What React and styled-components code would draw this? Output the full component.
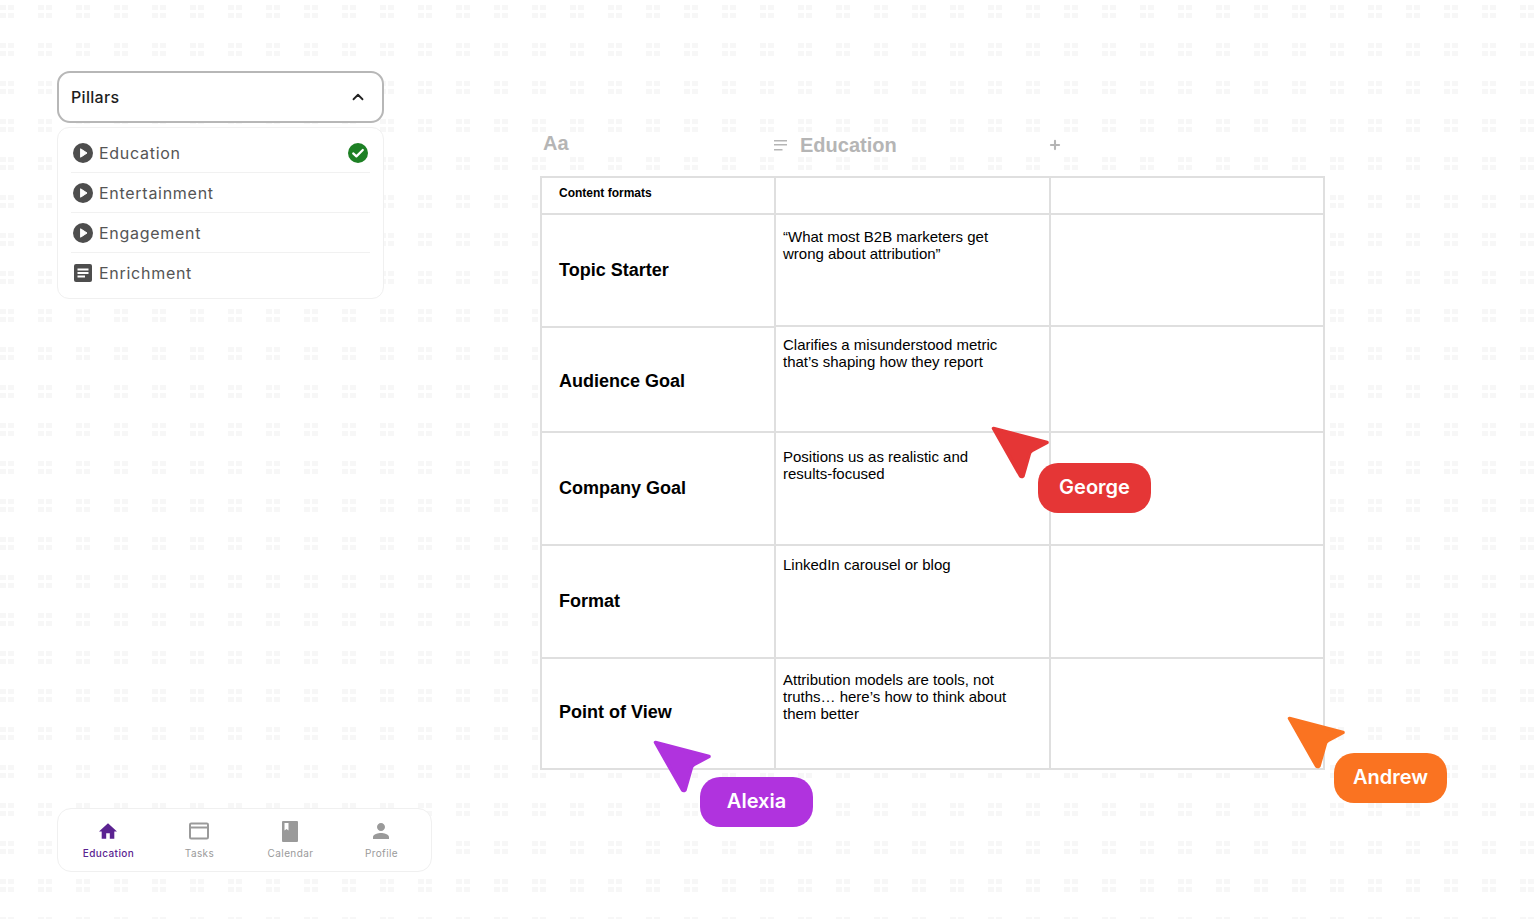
import React from "react"
import styled, { createGlobalStyle } from "styled-components"
import { ChevronUp, Plus } from "lucide-react"

const dot = "conic-gradient(from 270deg at 6px 5px, #f7f7f7 25%, transparent 0)"

const GlobalStyle = createGlobalStyle`
  html, body {
    margin: 0;
    padding: 0;
  }
  body {
    background-color: #fff;
    background-image: ${dot}, ${dot}, ${dot}, ${dot};
    background-size: 38px 38px;
    background-position: 0 5px, 8px 5px, 0 13px, 8px 13px;
    font-family: "Inter", "Liberation Sans", sans-serif;
  }
`

const Page = styled.div`
  display: flex;
  gap: 108px;
  width: 1536px;
  height: 919px;
  padding-left: 57px;
  box-sizing: border-box;
  overflow: hidden;
`

const Side = styled.aside`
  width: 375px;
  display: flex;
  flex-direction: column;
  justify-content: space-between;
  padding: 71px 0 47px;
  box-sizing: border-box;
`

const Menu = styled.div`
  width: 327px;
  display: flex;
  flex-direction: column;
  gap: 4px;
`

const Select = styled.div`
  height: 52px;
  box-sizing: border-box;
  border: 2px solid #b7b7b7;
  border-radius: 13px;
  background: #fff;
  display: flex;
  align-items: center;
  justify-content: space-between;
  padding: 0 15px 0 12px;
  font-size: 16px;
  font-weight: 500;
  letter-spacing: 0.3px;
  color: #1d1d1d;
`

const OptionList = styled.ul`
  list-style: none;
  margin: 0;
  height: 172px;
  box-sizing: border-box;
  padding: 5px 13px 6px;
  background: #fff;
  border: 1px solid #f0f0f0;
  border-radius: 12px;
`

const Option = styled.li`
  height: 40px;
  box-sizing: border-box;
  display: flex;
  align-items: center;
  gap: 6px;
  padding: 0 2px;
  font-size: 16px;
  letter-spacing: 0.72px;
  color: #555;
  border-bottom: 1px solid ${(p) => (p.$last ? "transparent" : "#f1f1f1")};
`

const OptionName = styled.span`
  flex: 1;
`

const BottomNav = styled.nav`
  height: 64px;
  box-sizing: border-box;
  display: grid;
  grid-template-columns: repeat(4, 91px);
  padding: 0 5px;
  background: #fff;
  border: 1px solid #f0f0f0;
  border-radius: 14px;
`

const NavItem = styled.div`
  display: flex;
  flex-direction: column;
  align-items: center;
  padding-top: 12px;
  gap: 5px;
  font-size: 10px;
  letter-spacing: 0.4px;
  line-height: 14px;
  color: ${(p) => (p.$active ? "#5b2391" : "#9a9a9a")};
  font-weight: ${(p) => (p.$active ? 500 : 400)};
`

const NavIconSlot = styled.span`
  height: 20px;
  margin-left: -1px;
  display: flex;
  align-items: center;
`

const Main = styled.main`
  width: 785px;
  padding-top: 128px;
  font-family: "Liberation Sans", Arial, sans-serif;
`

const ColumnBar = styled.div`
  height: 48px;
  display: grid;
  grid-template-columns: 231px 274px 30px;
  align-items: center;
  padding-left: 3px;
  padding-bottom: 14px;
  box-sizing: border-box;
  color: #b5b5b5;
  font-weight: 700;
`

const AaLabel = styled.div`
  font-size: 20px;
  margin-top: -4px;
`

const ColumnName = styled.div`
  display: flex;
  align-items: center;
  gap: 13px;
  font-size: 20px;
`

const TableWrap = styled.div`
  position: relative;
  width: 785px;
`

const Table = styled.div`
  border: 2px solid #dfdfdf;
  background: #fff;
  color: #000;
`

const Row = styled.div`
  display: grid;
  grid-template-columns: 234px 275px 272px;
  height: ${(p) => p.$height}px;
`

const Cell = styled.div`
  box-sizing: border-box;
  background: #fff;
  border-right: ${(p) => (p.$end ? "none" : "2px solid #dfdfdf")};
  border-bottom: ${(p) => (p.$bottom ? "none" : "2px solid #dfdfdf")};
`

const LabelCell = styled(Cell)`
  display: flex;
  align-items: center;
  padding: ${(p) => p.$above || 0}px 0 ${(p) => p.$below || 0}px 17px;
  font-size: 18px;
  font-weight: 700;
  ${(p) => p.$lower && "position: relative; z-index: 1; margin-bottom: -1px;"}
`

const TitleCell = styled(Cell)`
  padding: 8px 0 0 17px;
  font-size: 12px;
  line-height: 14px;
  font-weight: 700;
`

const TextCell = styled(Cell)`
  padding: ${(p) => p.$top}px 28px 0 7px;
  font-size: 15px;
  line-height: 17px;
`

const Collaborator = styled.div`
  position: absolute;
  left: ${(p) => p.$x}px;
  top: ${(p) => p.$y}px;
  width: 113px;
  height: 50px;
  padding-bottom: 2px;
  box-sizing: border-box;
  border-radius: 20px;
  background: ${(p) => p.$color};
  color: #fff;
  display: flex;
  align-items: center;
  justify-content: center;
  font-family: "Inter", "Liberation Sans", sans-serif;
  font-size: 20px;
  font-weight: 600;
  z-index: 2;
`

const Pointer = styled.svg`
  position: absolute;
  left: -50px;
  top: -40px;
`

const PlayIcon = () => (
  <svg width="20" height="20" viewBox="0 0 20 20">
    <circle cx="10" cy="10" r="10" fill="#4d4d4d" />
    <path d="M7.600 5.800 14 10l-6.400 4.200z" fill="#fff" stroke="#fff" strokeLinejoin="round" />
  </svg>
)

const DocIcon = () => (
  <svg width="20" height="20" viewBox="0 0 20 20">
    <rect x="1" y="1" width="18" height="18" rx="2" fill="#4d4d4d" />
    <path d="M4.500 5.500h11v2h-11zM4.500 9h11v2h-11zM4.500 12.500h7.500v2h-7.500z" fill="#fff" />
  </svg>
)

const CheckIcon = () => (
  <svg width="20" height="20" viewBox="0 0 20 20">
    <circle cx="10" cy="10" r="10" fill="#1d8024" />
    <path d="m5.200 10.400 3.200 3 6.400-6.400" fill="none" stroke="#fff" strokeWidth="2.200" strokeLinecap="round" strokeLinejoin="round" />
  </svg>
)

const LinesIcon = () => (
  <svg width="13" height="11" viewBox="0 0 13 11">
    <path d="M0 .75h13M0 4.750h13M0 9.750h8.500" stroke="#b5b5b5" strokeWidth="1.500" />
  </svg>
)

const HomeIcon = ({ color }) => (
  <svg width="20" height="20" viewBox="0.9 0.4 22.2 22.2">
    <path d="M10 20v-6h4v6h5v-8h3L12 3 2 12h3v8z" fill={color} />
  </svg>
)

const CardIcon = ({ color }) => (
  <svg width="20" height="20" viewBox="0 -1.500 20 20">
    <rect x="1" y="1" width="18" height="15" rx="1.200" fill="none" stroke={color} strokeWidth="2" />
    <path d="M1 5h18" stroke={color} strokeWidth="2" />
  </svg>
)

const BookIcon = ({ color }) => (
  <svg width="16" height="21" viewBox="0 0 16 21">
    <path fillRule="evenodd" d="M1 0h14a1 1 0 0 1 1 1v19a1 1 0 0 1-1 1H1a1 1 0 0 1-1-1V1a1 1 0 0 1 1-1zm1.500 2v7.500l2-1.500 2 1.500V2z" fill={color} />
  </svg>
)

const PersonIcon = ({ color }) => (
  <svg width="20" height="20" viewBox="2 2 20 20">
    <path d="M12 12c2.210 0 4-1.790 4-4s-1.790-4-4-4-4 1.790-4 4 1.790 4 4 4zm0 2c-2.670 0-8 1.340-8 4v2h16v-2c0-2.660-5.330-4-8-4z" fill={color} />
  </svg>
)

const options = [
  { name: "Education", Icon: PlayIcon, checked: true },
  { name: "Entertainment", Icon: PlayIcon },
  { name: "Engagement", Icon: PlayIcon },
  { name: "Enrichment", Icon: DocIcon },
]

const navItems = [
  { label: "Education", Icon: HomeIcon, active: true },
  { label: "Tasks", Icon: CardIcon },
  { label: "Calendar", Icon: BookIcon },
  { label: "Profile", Icon: PersonIcon },
]

const rows = [
  { label: "Topic Starter", text: "“What most B2B marketers get wrong about attribution”", height: 112, top: 13, lower: true },
  { label: "Audience Goal", text: "Clarifies a misunderstood metric that’s shaping how they report", height: 106, top: 9, above: 4 },
  { label: "Company Goal", text: "Positions us as realistic and results-focused", height: 113, top: 15 },
  { label: "Format", text: "LinkedIn carousel or blog", height: 113, top: 10 },
  { label: "Point of View", text: "Attribution models are tools, not truths… here’s how to think about them better", height: 109, top: 12, bottom: true, below: 2 },
]

const people = [
  { name: "George", color: "#e53636", x: 498, y: 287 },
  { name: "Alexia", color: "#b033de", x: 160, y: 601 },
  { name: "Andrew", color: "#fa7321", x: 794, y: 577 },
]

function App() {
  return (
    <Page>
      <GlobalStyle />
      <Side>
        <Menu>
          <Select>
            Pillars
            <ChevronUp size={18} strokeWidth={2.4} color="#222" />
          </Select>
          <OptionList>
            {options.map(({ name, Icon, checked }, i) => (
              <Option key={name} $last={i === options.length - 1}>
                <Icon />
                <OptionName>{name}</OptionName>
                {checked && <CheckIcon />}
              </Option>
            ))}
          </OptionList>
        </Menu>
        <BottomNav>
          {navItems.map(({ label, Icon, active }) => (
            <NavItem key={label} $active={active}>
              <NavIconSlot>
                <Icon color={active ? "#5b2391" : "#9a9a9a"} />
              </NavIconSlot>
              {label}
            </NavItem>
          ))}
        </BottomNav>
      </Side>
      <Main>
        <ColumnBar>
          <AaLabel>Aa</AaLabel>
          <ColumnName>
            <LinesIcon />
            Education
          </ColumnName>
          <Plus size={14} strokeWidth={3.6} color="#b5b5b5" />
        </ColumnBar>
        <TableWrap>
          <Table>
            <Row $height={37}>
              <TitleCell>Content formats</TitleCell>
              <Cell />
              <Cell $end />
            </Row>
            {rows.map((row) => (
              <Row key={row.label} $height={row.height}>
                <LabelCell $lower={row.lower} $bottom={row.bottom} $above={row.above} $below={row.below}>
                  {row.label}
                </LabelCell>
                <TextCell $top={row.top} $bottom={row.bottom}>{row.text}</TextCell>
                <Cell $end $bottom={row.bottom} />
              </Row>
            ))}
          </Table>
          {people.map((person) => (
            <Collaborator key={person.name} $x={person.x} $y={person.y} $color={person.color}>
              <Pointer width="64" height="58" viewBox="0 0 64 58">
                <path
                  d="M5.500 5.500 L59 19.500 L44 27.500 Q41.500 29 41 32 L35 53 Q33.500 54 32.500 53 Z"
                  fill={person.color}
                  stroke={person.color}
                  strokeWidth="3.500"
                  strokeLinejoin="round"
                />
              </Pointer>
              {person.name}
            </Collaborator>
          ))}
        </TableWrap>
      </Main>
    </Page>
  )
}

export default App
